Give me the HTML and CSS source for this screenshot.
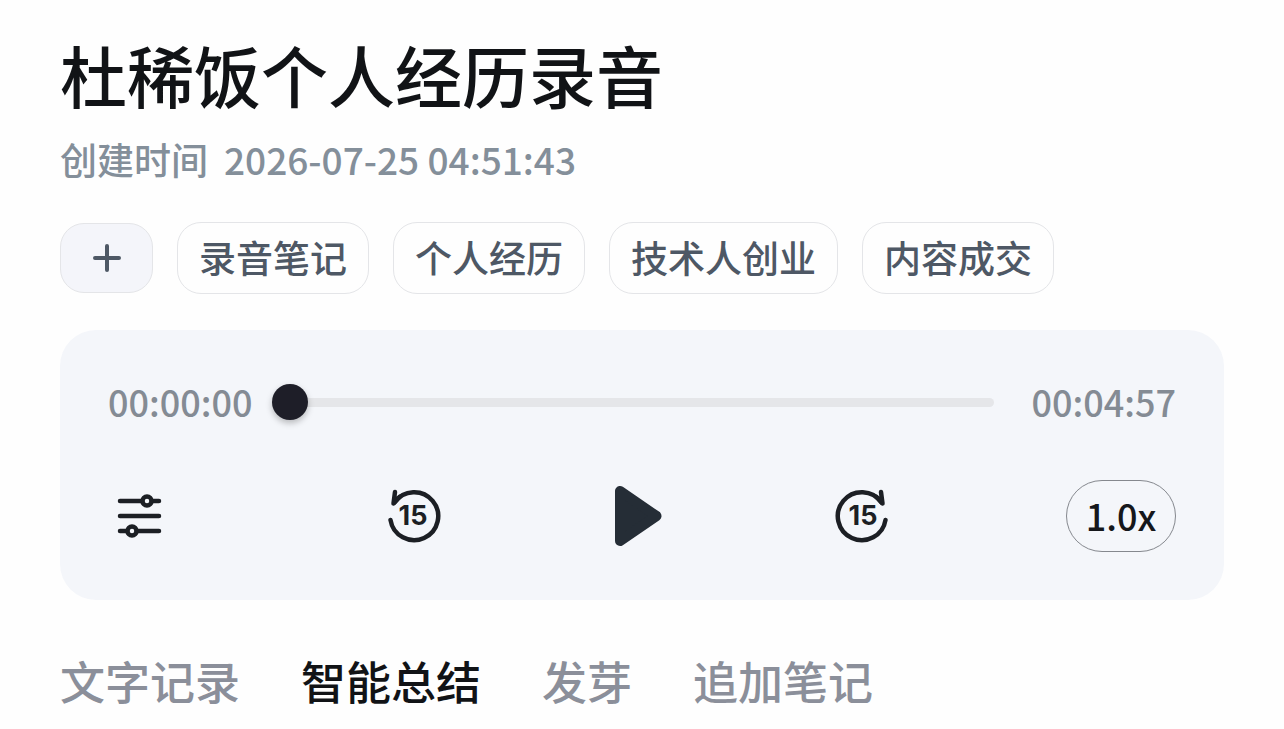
FILE: index.html
```html
<!DOCTYPE html>
<html lang="zh-CN">
<head>
  <meta charset="UTF-8">
  <meta name="viewport" content="width=device-width, initial-scale=1.0">
  <title>杜稀饭个人经历录音</title>
  <link rel="stylesheet" href="styles.css">
</head>
<body>
  <main class="note">
    <h1 class="title">杜稀饭个人经历录音</h1>
    <p class="created"><span>创建时间</span><time datetime="2026-07-25T04:51:43">2026-07-25 04:51:43</time></p>

    <div class="tags">
      <button type="button" class="tag_add" aria-label="添加标签">
        <svg width="28" height="28" viewBox="0 0 28 28"><path d="M14 2v24M2 14h24"/></svg>
      </button>
      <button type="button" class="tag">录音笔记</button>
      <button type="button" class="tag">个人经历</button>
      <button type="button" class="tag">技术人创业</button>
      <button type="button" class="tag">内容成交</button>
    </div>

    <section class="player">
      <div class="progress">
        <span class="time">00:00:00</span>
        <input type="range" class="seek" min="0" max="297" value="0" aria-label="播放进度">
        <span class="time">00:04:57</span>
      </div>
      <div class="controls">
        <button type="button" class="control setting" aria-label="设置">
          <svg width="64" height="64" viewBox="0 0 64 64">
            <path d="M12 17h22M44 17h7M12 32h39M12 47h7M29 47h22"/>
            <circle cx="39" cy="17" r="4.5"/>
            <circle cx="24" cy="47" r="4.5"/>
          </svg>
        </button>
        <div class="control_group">
          <button type="button" class="control" aria-label="后退15秒">
            <svg width="64" height="64" viewBox="0 0 64 64">
              <path d="M8.5 36A24 24 0 1 0 12.5 18.500"/>
              <path d="M13 8L11.5 19.500L17.5 13"/>
              <text x="31" y="41">15</text>
            </svg>
          </button>
          <button type="button" class="control" aria-label="播放">
            <svg class="play" width="64" height="64" viewBox="0 0 64 64">
              <path d="M14 7v50L50.5 32z"/>
            </svg>
          </button>
          <button type="button" class="control" aria-label="前进15秒">
            <svg width="64" height="64" viewBox="0 0 64 64">
              <path d="M55.5 36A24 24 0 1 1 51.5 18.500"/>
              <path d="M51 8L52.5 19.500L46.5 13"/>
              <text x="33" y="41">15</text>
            </svg>
          </button>
        </div>
        <button type="button" class="speed">1.0x</button>
      </div>
    </section>

    <nav class="tabs">
      <a href="#text">文字记录</a>
      <a href="#summary" class="on">智能总结</a>
      <a href="#sprout">发芽</a>
      <a href="#append">追加笔记</a>
    </nav>
  </main>
</body>
</html>
```
FILE: styles.css
```css
*{margin:0;padding:0;box-sizing:border-box;}

body, button{
  font-family: "Noto Sans CJK SC", "Noto Sans", sans-serif;
  font-weight: 500;
}
body{
  background-color: #fefefe;
  color: #111316;
}
button{
  background: none;
  border: 0;
  cursor: pointer;
}
a{text-decoration: none;}
svg{display: block;}

.note{padding: 34px 60px 0;}
.title{
  font-size: 67px;
  line-height: 80px;
  font-weight: 500;
}
.created{
  display: flex;
  gap: 16px;
  margin-top: 21px;
  font-size: 37px;
  line-height: 48px;
  color: #848f9a;
}

/* 标签 */
.tags{
  display: flex;
  flex-wrap: wrap;
  align-items: center;
  gap: 24px;
  margin-top: 39px;
}
.tag, .tag_add{
  border: 1px solid #e4e5e8;
  border-radius: 24px;
}
.tag{
  height: 72px;
  padding: 0 21px 2px;
  font-size: 37px;
  color: #4e5865;
}
.tag_add{
  display: flex;
  align-items: center;
  justify-content: center;
  width: 93px;
  height: 70px;
  background-color: #f4f5fa;
}
.tag_add svg{
  stroke: #4e5865;
  stroke-width: 4;
  stroke-linecap: round;
}

/* 播放器 */
.player{
  margin-top: 36px;
  padding: 48px;
  border-radius: 36px;
  background-color: #f4f6fa;
}
.progress{
  display: flex;
  align-items: center;
  height: 48px;
}
.time{
  padding-bottom: 2px;
  font-size: 36px;
  line-height: 48px;
  color: #848b94;
}
.seek{
  flex: 1;
  min-width: 0;
  height: 36px;
  margin: 0 37px 0 19px;
  appearance: none;
  background: none;
}
.seek::-webkit-slider-runnable-track{
  height: 9px;
  border-radius: 5px;
  background-color: #e5e6e9;
}
.seek::-webkit-slider-thumb{
  appearance: none;
  width: 36px;
  height: 36px;
  margin-top: -14px;
  border-radius: 50%;
  background-color: #1e1e28;
  box-shadow: 0 3px 6px rgba(0,0,0,.25);
}
.controls{
  display: flex;
  align-items: center;
  justify-content: space-between;
  margin-top: 54px;
}
.control_group{
  display: flex;
  gap: 160px;
}
.control svg{
  fill: none;
  stroke: #1c1f24;
  stroke-width: 4.5;
  stroke-linecap: round;
  stroke-linejoin: round;
}
.control text{
  fill: #1c1f24;
  stroke: none;
  font-family: Inter, "Liberation Sans", sans-serif;
  font-size: 27px;
  font-weight: 700;
  text-anchor: middle;
}
.setting{
  width: 102px;
}
.control .play{
  fill: #252d36;
  stroke: #252d36;
  stroke-width: 10;
}
.speed{
  width: 110px;
  height: 72px;
  padding-bottom: 2px;
  border: 1px solid #85888e;
  border-radius: 36px;
  font-size: 36px;
  color: #15171b;
}

/* 页签 */
.tabs{
  display: flex;
  gap: 61px;
  margin-top: 51px;
  font-size: 45px;
  line-height: 60px;
}
.tabs a{color: #8b8f9a;}
.tabs .on{color: #111316;}
```
